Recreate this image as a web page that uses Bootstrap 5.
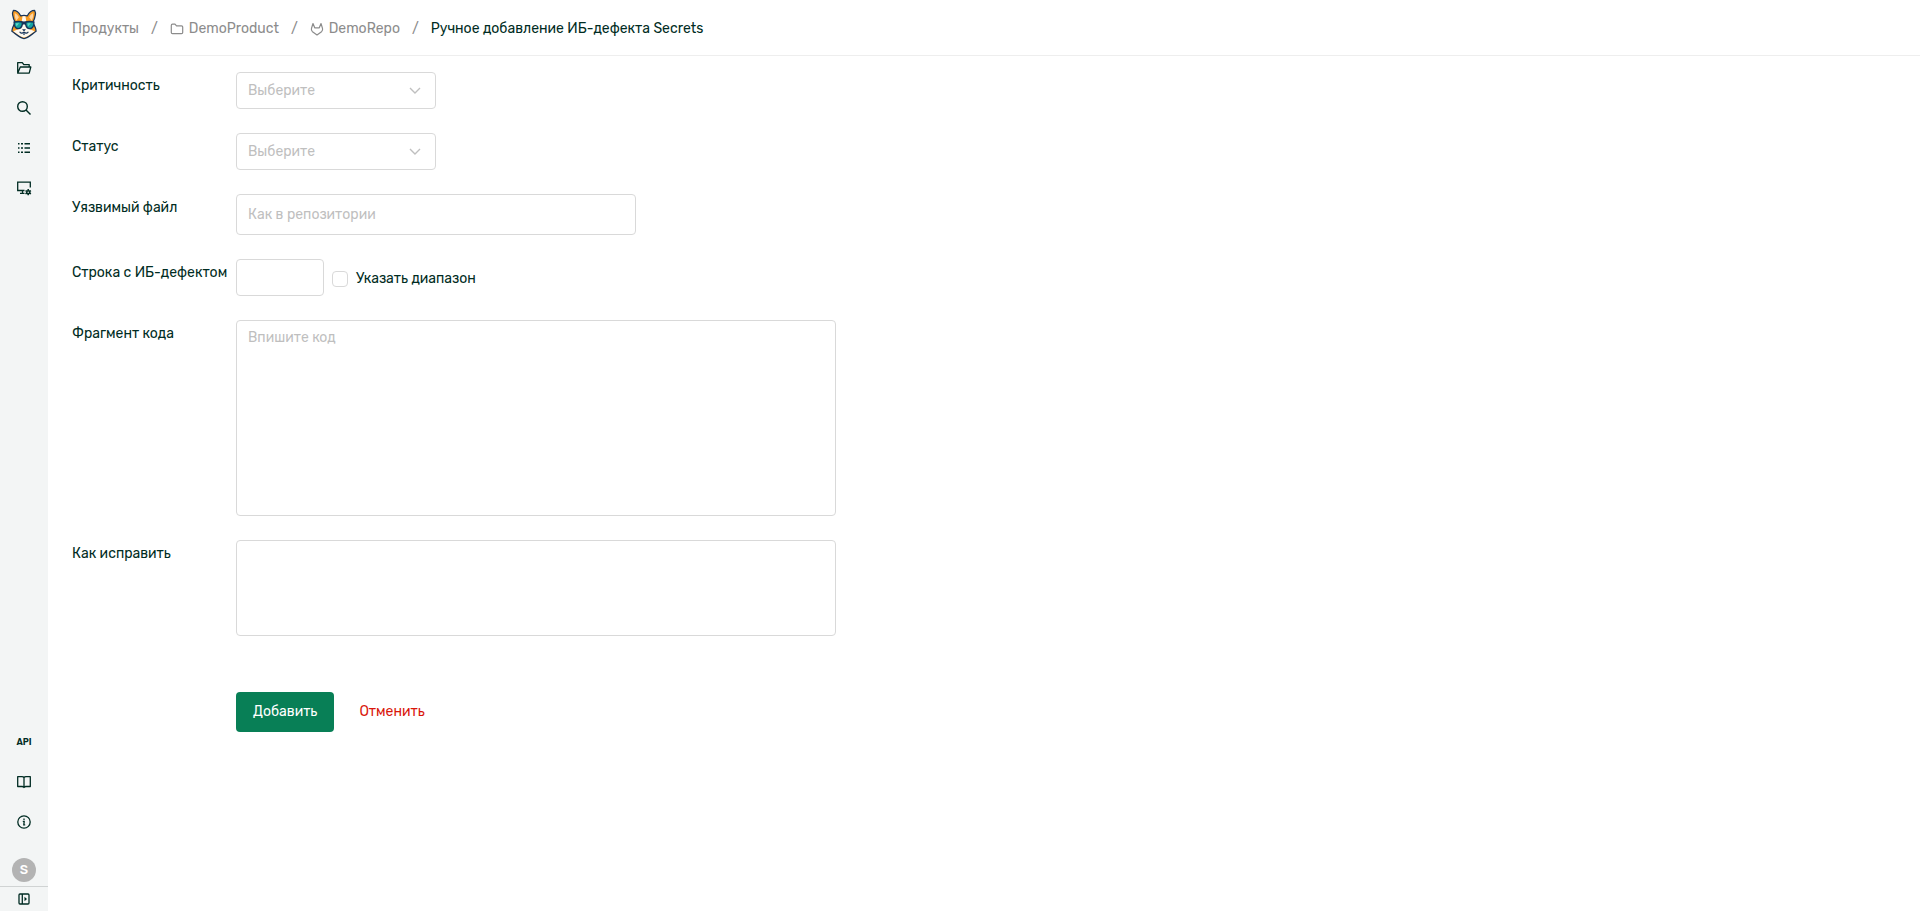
<!DOCTYPE html>
<html lang="ru">
<head>
<meta charset="utf-8">
<meta name="viewport" content="width=device-width, initial-scale=1">
<title>Ручное добавление ИБ-дефекта Secrets</title>
<link href="https://cdn.jsdelivr.net/npm/bootstrap@5.3.0/dist/css/bootstrap.min.css" rel="stylesheet">
<style>
  :root { --ink: #002c23; --line: #d9d9d9; --hint: #bfbfbf; --label-col: 164px; }
  body { font: 400 14px/22px Rubik, Inter, "Noto Sans", sans-serif; color: var(--ink); background: #fff; }
  .side { width: 48px; background: #f3f5f5; color: var(--ink); }
  .side a, .side button { color: inherit; width: 48px; height: 40px; }
  .side .brand { height: 48px; padding-top: 9px; }
  .side .avatar-link { height: 32px; margin-top: 12px; }
  .side .toggle { height: 25px; border-top: 1px solid #d0d3d3 !important; }
  .avatar { width: 24px; height: 24px; background: #b3b3b3; color: #fff; font-size: 13px; font-weight: 500; }
  .api { font-size: 9px; font-weight: 600; }
  .topbar { height: 56px; padding-top: 2px; border-bottom: 1px solid #eee; }
  .crumbs { --bs-breadcrumb-divider-color: #8c8c8c; --bs-breadcrumb-item-padding-x: 12px; --bs-breadcrumb-item-active-color: var(--ink); }
  .crumbs a { color: #8c8c8c; gap: 5px; }
  .field-name { width: var(--label-col); padding-top: 3px; }
  .form-select, .form-control { font-size: 14px; line-height: 22px; color: var(--ink); border-color: var(--line); border-radius: 4px; padding: 6px 11px; max-width: 100%; }
  .form-select { width: 200px; height: 37px; padding-top: 7px; color: var(--hint); background-image: url("data:image/svg+xml,%3csvg xmlns='http://www.w3.org/2000/svg' viewBox='0 0 12 12'%3e%3cpath d='M1 3l5 5 5-5' fill='none' stroke='%23bfbfbf' stroke-width='1.4'/%3e%3c/svg%3e"); background-size: 12px; background-position: right 14px center; }
  .form-control::placeholder { color: var(--hint); }
  .w-file { width: 400px; height: 41px; }
  .w-line { width: 88px; height: 37px; }
  .w-text { width: 600px; resize: none; }
  .h-code { height: 196px; }
  .h-fix { height: 96px; }
  .range-option { padding-top: 2px; }
  .range-box.form-check-input { width: 16px; height: 16px; border-color: var(--line); border-radius: 4px; }
  .actions { margin-left: var(--label-col); margin-top: 56px; }
  .actions .btn { --bs-btn-font-size: 14px; --bs-btn-line-height: 22px; --bs-btn-padding-y: 8px; --bs-btn-border-radius: 4px; height: 40px; }
  .btn-add { --bs-btn-bg: #087f56; --bs-btn-color: #fff; --bs-btn-hover-bg: #066b48; --bs-btn-hover-color: #fff; --bs-btn-padding-x: 16px; }
  .btn-drop { --bs-btn-color: #d9160b; --bs-btn-hover-color: #a81008; --bs-btn-padding-x: 24px; }
</style>
</head>
<body>
<div class="d-flex min-vh-100">
  <aside class="side d-flex flex-column flex-shrink-0 vh-100 sticky-top">
    <a class="brand d-flex justify-content-center" href="#" aria-label="Главная">
      <svg width="28" height="31" viewBox="0 0 28 32">
        <path d="M5 14C2.500 9 1.500 4 3 1.500c3 0 6 2.500 7.500 5.500q3.500-1 7 0C19 4 22 1.500 25 1.500c1.500 2.500.5 7.500-2 12.500 2.500 4 3.500 7 3.500 9C22 26 18 30 14 30.500 10 30 6 26 1.500 23c0-2 1-5 3.500-9z" fill="#f79b22" stroke="#17345a" stroke-width="1.300" stroke-linejoin="round"/>
        <path d="M4.500 4q3 1.500 4.200 4.500L6 12Q4 8 4.500 4zM23.500 4q-3 1.500-4.200 4.500L22 12q2-4 1.500-8z" fill="#ffd4a0"/>
        <path d="M12.500 7.500h3l1 6.500 3.500 7 5 2c-4 2.500-7.500 6-11 6.500C10.500 29 7 25.500 3 23l5-2 3.500-7z" fill="#fff9ef"/>
        <path d="M3 12.800q5.500-1.500 11 0 5.500-1.500 11 0l-.5 4.500c-1 3-3 3.700-5 3.700s-3.800-1.500-4.500-5h-2c-.7 3.500-2.500 5-4.500 5s-4-.7-5-3.700z" fill="#17345a"/>
        <path d="M4.500 14.300q4-1 7 0c.3 3-1 5.200-3.500 5.200s-3.800-2.200-3.500-5.200zM16.500 14.300q3-1 7 0c.3 3-1 5.200-3.500 5.200s-3.800-2.200-3.500-5.200z" fill="#14a3a0"/>
        <path d="M5.500 14.800h3.500l-2.800 3.200zM17.500 14.800h3.500l-2.800 3.200z" fill="#62d6c5"/>
        <path d="M12 21h4l-2 2.200z" fill="#17345a"/>
        <path d="M9.500 23.500q1.500 2.500 4.500.5 3 2 4.500-.5" fill="none" stroke="#17345a" stroke-width="1.200"/>
        <path d="M12.500 25.200h3l-1.500 1.800z" fill="#17345a"/>
      </svg>
    </a>
    <nav class="d-flex flex-column" aria-label="Разделы">
      <a class="d-flex align-items-center justify-content-center" href="#" aria-label="Продукты">
        <svg width="16" height="16" viewBox="0 0 16 16" fill="none" stroke="currentColor" stroke-width="1.300" stroke-linejoin="round"><path d="M1.700 12.700V2.600h4.600l1.500 2h5.400v2.200M1.700 13.200L4.300 7h10.500l-1.600 6.200z"/></svg>
      </a>
      <a class="d-flex align-items-center justify-content-center" href="#" aria-label="Поиск">
        <svg width="16" height="16" viewBox="0 0 16 16" fill="none" stroke="currentColor" stroke-width="1.400"><circle cx="6.500" cy="6.500" r="4.800"/><path d="M10 10l4.500 4.500"/></svg>
      </a>
      <a class="d-flex align-items-center justify-content-center" href="#" aria-label="Список">
        <svg width="16" height="16" viewBox="0 0 16 16" fill="none" stroke="currentColor" stroke-width="1.400"><path d="M2 3.800h1.500M5 3.800h2M8.500 3.800h5.500M2 8h1.500M5 8h2M8.500 8h5.500M2 12.200h1.500M5 12.200h2M8.500 12.200h5.500"/></svg>
      </a>
      <a class="d-flex align-items-center justify-content-center" href="#" aria-label="Настройки">
        <svg width="16" height="16" viewBox="0 0 16 16" fill="none" stroke="currentColor" stroke-width="1.300"><path d="M8.500 10.500H1.700V2.200h12.600v5.300M6.500 10.500v2.800M4 13.300h4.500"/><circle cx="12.200" cy="12.200" r="1.500" stroke-width="1.500"/><path d="M12.200 9.100v1.500M12.200 13.800v1.500M9.500 10.600l1.300.8M13.600 13l1.300.8M9.500 13.800l1.300-.8M13.600 11.400l1.300-.8" stroke-width="1.500"/></svg>
      </a>
    </nav>
    <nav class="d-flex flex-column mt-auto" aria-label="Справка">
      <a class="api d-flex align-items-center justify-content-center text-decoration-none" href="#">API</a>
      <a class="d-flex align-items-center justify-content-center" href="#" aria-label="Документация">
        <svg width="16" height="16" viewBox="0 0 16 16" fill="none" stroke="currentColor" stroke-width="1.300" stroke-linejoin="round"><path d="M8 3.800Q7.500 2.700 6 2.700H1.700v9.800H6q1.500 0 2 1 .5-1 2-1h4.300V2.700H10q-1.500 0-2 1.100zv9.500"/></svg>
      </a>
      <a class="d-flex align-items-center justify-content-center" href="#" aria-label="О системе">
        <svg width="16" height="16" viewBox="0 0 16 16" fill="none" stroke="currentColor" stroke-width="1.300"><circle cx="8" cy="8" r="6.200"/><path d="M8 4.500v1.400M6.800 7.400h1.400l-.4 3.400h1.400"/></svg>
      </a>
      <a class="avatar-link d-flex align-items-center justify-content-center text-decoration-none" href="#"><span class="avatar rounded-circle d-flex align-items-center justify-content-center">S</span></a>
      <button class="toggle d-flex align-items-center justify-content-center border-0 bg-transparent p-0" type="button" aria-label="Развернуть меню">
        <svg width="12" height="12" viewBox="0 0 12 12" fill="none" stroke="currentColor" stroke-width="1.300"><rect x="1" y="1" width="10" height="10" rx="1"/><path d="M4.300 1v10"/><path d="M6.500 3.800L9 6 6.500 8.200z" fill="currentColor" stroke="none"/></svg>
      </button>
    </nav>
  </aside>

  <div class="flex-grow-1">
    <header class="topbar d-flex align-items-center px-4">
      <nav aria-label="Путь">
        <ol class="crumbs breadcrumb mb-0">
          <li class="breadcrumb-item"><a class="text-decoration-none" href="#">Продукты</a></li>
          <li class="breadcrumb-item d-flex"><a class="text-decoration-none d-flex align-items-center" href="#">
            <svg width="14" height="14" viewBox="0 0 14 14" fill="none" stroke="currentColor" stroke-width="1.200" stroke-linejoin="round"><path d="M2.500 2.200H5l1.500 1.700h5q1.200 0 1.200 1.200v5.400q0 1.200-1.200 1.200h-9q-1.200 0-1.200-1.200V3.400q0-1.200 1.200-1.200z"/></svg>DemoProduct</a></li>
          <li class="breadcrumb-item d-flex"><a class="text-decoration-none d-flex align-items-center" href="#">
            <svg width="14" height="14" viewBox="0 0 14 14" fill="none" stroke="currentColor" stroke-width="1.200" stroke-linejoin="round"><path d="M3 1.500L1.500 6.300q-.6 2 1 3.400L7 13l4.500-3.300q1.600-1.400 1-3.400L11 1.500 9.300 5.800H4.700z"/></svg>DemoRepo</a></li>
          <li class="breadcrumb-item active" aria-current="page">Ручное добавление ИБ-дефекта Secrets</li>
        </ol>
      </nav>
    </header>

    <main class="px-4 py-3">
      <form id="defect" class="d-flex flex-column gap-4">
        <div class="d-flex">
          <label class="field-name flex-shrink-0" for="severity">Критичность</label>
          <select class="form-select" id="severity"><option>Выберите</option></select>
        </div>
        <div class="d-flex">
          <label class="field-name flex-shrink-0" for="status">Статус</label>
          <select class="form-select" id="status"><option>Выберите</option></select>
        </div>
        <div class="d-flex">
          <label class="field-name flex-shrink-0" for="file">Уязвимый файл</label>
          <input class="form-control w-file" id="file" type="text" placeholder="Как в репозитории">
        </div>
        <div class="d-flex">
          <label class="field-name flex-shrink-0" for="line">Строка с ИБ-дефектом</label>
          <div class="d-flex align-items-center gap-2">
            <input class="form-control w-line" id="line" type="text">
            <div class="range-option d-flex align-items-center gap-2">
              <input class="form-check-input range-box m-0" id="range" type="checkbox">
              <label for="range">Указать диапазон</label>
            </div>
          </div>
        </div>
        <div class="d-flex">
          <label class="field-name flex-shrink-0" for="code">Фрагмент кода</label>
          <textarea class="form-control w-text h-code" id="code" placeholder="Впишите код"></textarea>
        </div>
        <div class="d-flex">
          <label class="field-name flex-shrink-0" for="fix">Как исправить</label>
          <textarea class="form-control w-text h-fix" id="fix"></textarea>
        </div>
      </form>
      <div class="actions d-flex">
        <button class="btn btn-add" type="submit" form="defect">Добавить</button>
        <button class="btn btn-drop" type="button">Отменить</button>
      </div>
    </main>
  </div>
</div>
<script src="https://cdn.jsdelivr.net/npm/bootstrap@5.3.0/dist/js/bootstrap.bundle.min.js"></script>
</body>
</html>
